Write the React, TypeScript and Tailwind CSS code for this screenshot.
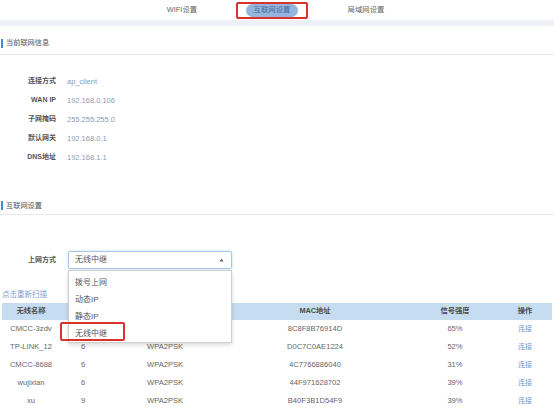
import React from 'react';

const FONT = '"Liberation Sans", "Noto Sans CJK SC", sans-serif';

const INFO = [
  { label: '连接方式', value: 'ap_client' },
  { label: 'WAN IP', value: '192.168.0.106' },
  { label: '子网掩码', value: '255.255.255.0' },
  { label: '默认网关', value: '192.168.0.1' },
  { label: 'DNS地址', value: '192.168.1.1' },
];

const OPTIONS = ['拨号上网', '动态IP', '静态IP', '无线中继'];

const ROWS = [
  { ssid: 'CMCC-3zdv', ch: '6', enc: 'WPA2PSK', mac: '8C8F8B76914D', sig: '65%' },
  { ssid: 'TP-LINK_12', ch: '6', enc: 'WPA2PSK', mac: 'D0C7C0AE1224', sig: '52%' },
  { ssid: 'CMCC-8688', ch: '6', enc: 'WPA2PSK', mac: '4C7766886040', sig: '31%' },
  { ssid: 'wujixian', ch: '6', enc: 'WPA2PSK', mac: '44F971628702', sig: '39%' },
  { ssid: 'xu', ch: '9', enc: 'WPA2PSK', mac: 'B40F3B1D54F9', sig: '39%' },
];

const GRID = 'grid grid-cols-[58px_80px_90px_170px_110px_30px_1fr] items-center';

function SectionTitle({ title, className }: { title: string; className?: string }) {
  return (
    <div className={`flex items-center border-b border-[#e6eaef] ${className ?? ''}`}>
      <div className="ml-[1px] w-[2px] h-[9px] bg-[#3a8ee0]" />
      <span className="ml-[3px] text-[7.2px] text-[#555] leading-none">{title}</span>
    </div>
  );
}

export default function App() {
  return (
    <div className="w-[554px] h-[409px] overflow-hidden bg-white" style={{ fontFamily: FONT }}>
      {/* Tabs */}
      <div className="h-[20px] flex items-center pl-[148px]">
        <div className="w-[68px] text-center text-[7.4px] text-[#666]">WIFI设置</div>
        <div className="ml-[20px] w-[72px] h-[17px] border-2 border-[#d8322c] rounded-[2px] flex items-center justify-center">
          <div className="w-[52px] h-[13px] rounded-full bg-[#94b6de] flex items-center justify-center text-[7.4px] text-[#45699a]">
            互联网设置
          </div>
        </div>
        <div className="ml-[24px] w-[68px] text-center text-[7.4px] text-[#666]">局域网设置</div>
      </div>
      <div className="h-[6px] bg-[#edf1f6]" />

      {/* Current info */}
      <SectionTitle title="当前联网信息" className="h-[29px] pt-[6px]" />
      <div className="mt-[17px]">
        {INFO.map((r) => (
          <div key={r.label} className="h-[19px] flex items-center">
            <div className="w-[56px] text-right text-[7px] font-bold text-[#555]">{r.label}</div>
            <div className="ml-[11px] text-[7.5px] text-[#8b9cb6]">{r.value}</div>
          </div>
        ))}
      </div>

      {/* Internet settings */}
      <SectionTitle title="互联网设置" className="mt-[30px] h-[18px]" />
      <div className="mt-[36px] flex items-center h-[18px]">
        <div className="w-[56px] text-right text-[7px] font-bold text-[#555]">上网方式</div>
        <div className="ml-[12px] relative w-[164px] h-[18px] border border-[#a8c7e6] rounded-[2px] shadow-[0_0_3px_#c4dbf2] flex items-center justify-between px-[6px]">
          <span className="text-[8px] text-[#555]">无线中继</span>
          <svg width="5" height="4" viewBox="0 0 5 4" className="mr-[1px]">
            <path d="M2.5 0.5 L4.5 3.5 L0.5 3.5 Z" fill="#666" />
          </svg>
          {/* Dropdown */}
          <div className="absolute left-[-1px] top-[18px] w-[164px] h-[73px] bg-white border border-[#cfcfcf] shadow-[0_2px_4px_rgba(0,0,0,0.15)] pt-[3px] z-10">
            {OPTIONS.map((o) => (
              <div key={o} className="h-[17px] flex items-center pl-[6px] text-[8px] text-[#555]">
                {o}
              </div>
            ))}
            <div className="absolute left-[-9px] top-[51px] w-[65px] h-[19px] border-2 border-[#d8322c] rounded-[2px]" />
          </div>
        </div>
      </div>

      <div className="mt-[21px] ml-[2px] h-[10px] flex items-center text-[7.5px] text-[#7aa0d0]">点击重新扫描</div>

      {/* Scan table */}
      <div className="mt-[3px] mx-[2px]">
        <div className={`${GRID} h-[17px] bg-[#c6dcf0] text-[7.3px] text-[#4a4a4a] font-bold`}>
          <div className="text-center">无线名称</div>
          <div className="pl-[23px] invisible">信道</div>
          <div className="pl-[9px] invisible">加密方式</div>
          <div className="text-center">MAC地址</div>
          <div className="text-center">信号强度</div>
          <div className="text-center">操作</div>
          <div />
        </div>
        {ROWS.map((r, i) => (
          <div key={r.mac} className={`${GRID} h-[18px] text-[7.6px] text-[#666]`}>
            <div className="text-center">{r.ssid}</div>
            <div className={i === 0 ? 'pl-[21px] invisible' : 'pl-[21px]'}>{r.ch}</div>
            <div className={i === 0 ? 'pl-[7px] invisible' : 'pl-[7px]'}>{r.enc}</div>
            <div className="text-center">{r.mac}</div>
            <div className="text-center">{r.sig}</div>
            <div className="text-center text-[7px] text-[#6d9bd2]">连接</div>
            <div />
          </div>
        ))}
      </div>
    </div>
  );
}
